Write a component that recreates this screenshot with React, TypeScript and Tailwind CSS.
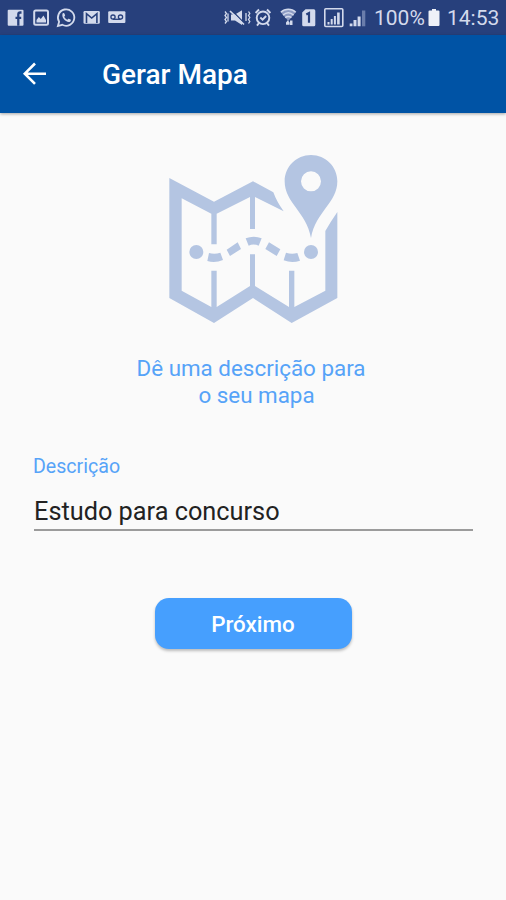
import { useState } from 'react';

function NotificationIcons() {
  return (
    <svg width="120" height="35" viewBox="0 0 120 35" className="text-[#d3daec]">
      {/* Facebook */}
      <rect x="0.700" y="9.700" width="15.800" height="16" rx="1" fill="currentColor" />
      <path fill="none" stroke="#27407c" strokeWidth="2.300" d="M14.500 12.500h-1.200c-1.500 0-2 .8-2 2V25.700M8.500 17.800h5.700" />
      {/* Gallery */}
      <rect x="27.200" y="10.400" width="13.800" height="14.300" rx="1.500" fill="none" stroke="currentColor" strokeWidth="2" />
      <path fill="currentColor" d="M29.500 22.500v-2.500l2.300-3 2 2 2.700-3.500 2.500 4.500v2.500z" />
      {/* WhatsApp */}
      <path
        fill="none"
        stroke="currentColor"
        strokeWidth="1.800"
        d="M50.900 26l1.200-4.200a8.200 8.200 0 1 1 3.200 3z"
      />
      <path
        fill="currentColor"
        d="M55.700 13.300c.6-.6 1.400-.5 1.700.2l.7 1.700c.1.500-.6 1.100-.9 1.500.7 1.400 1.700 2.300 3.200 3 .4-.4.900-1.200 1.400-1l1.700.9c.7.300.4 1.300-.1 1.800-3 2.500-9.800-3.500-7.700-8.100z"
      />
      {/* Gmail */}
      <rect x="76.500" y="11" width="16.300" height="12.800" rx="1.200" fill="currentColor" />
      <path fill="none" stroke="#27407c" strokeWidth="1.600" d="M79.500 23V13.600l5.200 4.400 5.200-4.400V23" />
      {/* Voicemail */}
      <rect x="101.200" y="11.300" width="17.200" height="11.800" rx="1" fill="currentColor" />
      <g fill="none" stroke="#27407c" strokeWidth="1.300">
        <circle cx="106" cy="17.100" r="2.100" />
        <circle cx="113.500" cy="17.100" r="2.100" />
        <path d="M106 19.300h7.500" />
      </g>
    </svg>
  );
}

function SystemIcons() {
  return (
    <svg width="145" height="35" viewBox="223 0 145 35" className="text-[#d3daec]">
      {/* Vibrate / muted */}
      <path fill="currentColor" d="M231 14.500h4l7-4.300v14.800l-7-4.500h-4z" />
      <path stroke="#27407c" strokeWidth="1.300" d="M232 10.500l12 12.500" />
      <path stroke="currentColor" strokeWidth="1.700" d="M230 11l14 13.500" />
      <path
        fill="none"
        stroke="currentColor"
        strokeWidth="1.300"
        d="M225 11.500l1.500 2-1.500 2 1.500 2-1.500 2 1.500 2-1.500 2M228 13.500v8M246 13v8M248.500 11.500l1.300 2-1.300 2 1.300 2-1.300 2 1.300 2-1.300 2"
      />
      {/* Alarm */}
      <g fill="none" stroke="currentColor" strokeWidth="1.900">
        <circle cx="263" cy="17.800" r="6.300" />
        <path d="M260.300 17.500l2.300 2.200 3.500-3.700M255.600 13l3.400-3.500M270.400 13l-3.400-3.500M259 23l-2 2.600M267 23l2 2.600" />
      </g>
      {/* Wi-Fi */}
      <path fill="#8c9bc3" d="M281 12.500c4.300-4 10.300-4 14.600 0l-7.300 8.500z" />
      <g fill="none" stroke="currentColor" strokeWidth="1.500">
        <path d="M280.800 12.300c4.300-4 10.700-4 15 0M283 15.100c3.200-2.800 7.400-2.800 10.600 0M285.200 17.700c1.900-1.500 4.300-1.500 6.200 0" />
      </g>
      <path fill="currentColor" d="M286 22.500l1.800-2.300 1.800 2.300v2.300H286zM290 20.500h2.500v4.500H290z" />
      {/* SIM 1 */}
      <path fill="currentColor" d="M305.500 9.200h8.300a1.500 1.500 0 0 1 1.500 1.500v14a1.500 1.500 0 0 1-1.500 1.500H303.700a1.500 1.500 0 0 1-1.500-1.500v-12.200z" />
      <path fill="none" stroke="#27407c" strokeWidth="2.200" d="M306.300 14.500l2.700-1.500v9.700" />
      {/* Boxed signal */}
      <rect x="324.800" y="8.800" width="18" height="17.700" rx="1" fill="none" stroke="currentColor" strokeWidth="1.600" />
      <path fill="currentColor" d="M327.500 22h2v2.500h-2zM330.700 19h2v5.500h-2zM333.900 16h2v8.500h-2zM337.100 12.500h2.600v12h-2.600z" />
      {/* Signal */}
      <path fill="currentColor" d="M349.700 23.500h2.800V26.300h-2.800zM353.500 20h3v6.300h-3zM357.600 16.500h3V26.300h-3z" />
      <path fill="#6a7dab" d="M362 10.500h3.300V26.300h-3.300z" />
    </svg>
  );
}

function StatusBar() {
  return (
    <div className="h-[35px] bg-[#27407c] flex items-center pl-[7px] pr-[7px] text-[#d3daec] text-[21px] leading-[35px]">
      <NotificationIcons />
      <div className="ml-auto flex items-center">
        <SystemIcons />
        <span className="ml-[6px] w-[51px] whitespace-nowrap pt-px">100%</span>
        <svg width="12" height="35" viewBox="0 0 12 35" className="ml-[3px]">
          <path fill="#eef1f8" d="M4 9h4v1.500h2.500a1 1 0 0 1 1 1V25a1 1 0 0 1-1 1h-9a1 1 0 0 1-1-1V11.500a1 1 0 0 1 1-1H4z" />
        </svg>
        <span className="ml-[7px] w-[52px] whitespace-nowrap pt-px">14:53</span>
      </div>
    </div>
  );
}

function AppBar() {
  return (
    <header className="relative h-[78px] bg-[#0053a5] flex items-center shadow-[0_1px_3px_rgba(0,0,0,0.35)]">
      <button type="button" aria-label="Voltar" className="ml-[22px]">
        <svg width="26" height="26" viewBox="0 0 26 26" fill="none" stroke="white" strokeWidth="2.600">
          <path d="M24 12.700H3M13 2.500L2.800 12.700 13 22.900" />
        </svg>
      </button>
      <h1 className="ml-[54px] pt-px text-[28px] font-medium text-white">Gerar Mapa</h1>
    </header>
  );
}

function MapIllustration() {
  return (
    <svg width="190" height="190" viewBox="0 0 570 570" className="ml-1 text-[#b4c5e2]">
      {/* Folded sheet */}
      <path
        fill="currentColor"
        fillRule="evenodd"
        d="M28 99L162 170 279 109 340 142Q350 170 371 199L285 156V252H270V156L170 206V298H154V206L65 160V437L154 486V377H170V486L270 423V328H285V423L387 486V377H403V486L496 437V258Q512 230 532 201V459L395 534 279 459 162 534 28 459Z"
      />
      {/* Route */}
      <circle cx="109" cy="321" r="21" fill="currentColor" />
      <circle cx="453" cy="321" r="21" fill="currentColor" />
      <path
        fill="currentColor"
        d="M147 324Q164 329 181 323L189 345Q165 355 142 348ZM200 314L233 292 243 312 210 333ZM257 280Q281 271 305 280L296 302Q280 295 266 302ZM327 292L361 313 350 333 316 312ZM378 323Q395 329 412 324L420 347Q396 356 371 346Z"
      />
      {/* Pin */}
      <path
        fill="currentColor"
        fillRule="evenodd"
        d="M453 30C497 30 532 65 532 109C532 174 467 200 453 279C439 200 374 174 374 109C374 65 409 30 453 30ZM453 79A30 30 0 1 0 453 139A30 30 0 1 0 453 79Z"
      />
    </svg>
  );
}

export default function App() {
  const [description, setDescription] = useState('Estudo para concurso');

  return (
    <div className="h-[900px] w-[506px] overflow-hidden bg-[#fafafa] font-['Roboto',sans-serif]">
      <StatusBar />
      <AppBar />

      <main className="flex flex-col items-center pt-8">
        <MapIllustration />
        <p className="mt-5 mr-1 text-center text-[22.400px] leading-[27px] text-[#56a3f8]">
          Dê uma descrição para
          <br />
          <span className="ml-[11px]">o seu mapa</span>
        </p>

        {/* Description field */}
        <div className="mt-[46px] w-full pl-[34px] pr-[33px]">
          <label htmlFor="description" className="-ml-px block text-[19.600px] leading-6 text-[#56a3f8]">
            Descrição
          </label>
          <input
            id="description"
            type="text"
            value={description}
            onChange={(e) => setDescription(e.target.value)}
            className="mt-[13px] block h-[39px] w-full border-b-2 border-[#9b9b9b] pt-[2px] text-[25.300px] text-[#222222] outline-none"
          />
        </div>

        <button
          type="button"
          className="mt-[67px] h-[51px] w-[197px] rounded-[14px] bg-[#469ffe] pt-[2px] text-[22.400px] font-medium text-white shadow-[0_2px_3px_rgba(0,0,0,0.25)]"
        >
          Próximo
        </button>
      </main>
    </div>
  );
}
